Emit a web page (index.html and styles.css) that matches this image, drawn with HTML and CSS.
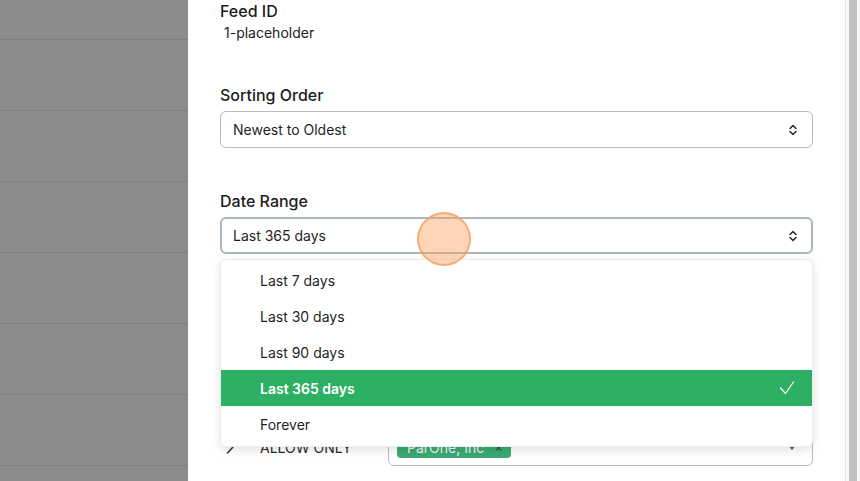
FILE: index.html
```html
<!DOCTYPE html>
<html>
<head>
<meta charset="utf-8">
<link rel="stylesheet" href="styles.css">
</head>
<body>
<div class="app">
  <div class="backdrop">
    <div class="brow first"></div>
    <div class="brow"></div>
    <div class="brow"></div>
    <div class="brow"></div>
    <div class="brow"></div>
    <div class="brow"></div>
    <div class="brow"></div>
    <div class="brow"></div>
  </div>
  <div class="panel">
    <div class="field">
      <div class="label">Feed ID</div>
      <div class="value">1-placeholder</div>
    </div>
    <div class="field sorting">
      <div class="label">Sorting Order</div>
      <div class="select">
        <span>Newest to Oldest</span>
        <svg class="updown" width="10" height="14" viewBox="0 0 10 14"><path d="M2 5.5 L5 2.5 L8 5.5 M2 8.5 L5 11.5 L8 8.5" fill="none" stroke="#2a2a2a" stroke-width="1.5" stroke-linecap="round" stroke-linejoin="round"/></svg>
      </div>
    </div>
    <div class="field daterange">
      <div class="label">Date Range</div>
      <div class="select-wrap">
        <div class="select focused">
          <span>Last 365 days</span>
          <svg class="updown" width="10" height="14" viewBox="0 0 10 14"><path d="M2 5.5 L5 2.5 L8 5.5 M2 8.5 L5 11.5 L8 8.5" fill="none" stroke="#2a2a2a" stroke-width="1.5" stroke-linecap="round" stroke-linejoin="round"/></svg>
        </div>
        <div class="cursor"></div>
        <ul class="menu">
          <li>Last 7 days</li>
          <li>Last 30 days</li>
          <li>Last 90 days</li>
          <li class="selected">Last 365 days
            <svg class="check" width="16" height="14" viewBox="0 0 16 14"><path d="M1.5 7 L6.5 12.5 L14.5 1" fill="none" stroke="#fff" stroke-width="1.2" stroke-linecap="round" stroke-linejoin="round"/></svg>
          </li>
          <li>Forever</li>
        </ul>
      </div>
    </div>
    <div class="filter-row">
      <svg class="toggle" width="10" height="16" viewBox="0 0 10 16"><path d="M2.5 2 L8 8 L2.5 14" fill="none" stroke="#333" stroke-width="1.6" stroke-linecap="round" stroke-linejoin="round"/></svg>
      <span class="rule">ALLOW ONLY</span>
      <div class="multi">
        <span class="tag">ParOne, Inc <span class="x">×</span></span>
        <span class="caret"></span>
      </div>
    </div>
  </div>
  <div class="scrollbar"><div class="thumb"></div></div>
</div>
</body>
</html>
```
FILE: styles.css
```css
* { box-sizing: border-box; }
html, body { margin: 0; padding: 0; overflow: hidden; }
body {
  width: 860px;
  height: 481px;
  font-family: Inter, "Noto Sans", sans-serif;
  color: #1f1f1f;
  background: #fff;
}
.app {
  display: flex;
  height: 481px;
  overflow: hidden;
}
.backdrop {
  width: 188px;
  flex: none;
  background: #8b8b8b;
  display: flex;
  flex-direction: column;
  overflow: hidden;
}
.brow {
  height: 71px;
  flex: none;
  border-top: 1px solid #7f7f7f;
}
.brow.first {
  height: 39px;
  border-top: none;
  background: #8b8d8c;
}
.panel {
  flex: 1;
  padding: 0 32px 0 32px;
  background: #fff;
  display: flex;
  flex-direction: column;
  overflow: hidden;
}
.label {
  font-size: 16px;
  font-weight: 500;
  line-height: 22px;
  color: #1c1c1c;
}
.value {
  font-size: 14px;
  line-height: 22px;
  padding-left: 4px;
  color: #222;
}
.sorting { margin-top: 40px; }
.sorting .label { margin-bottom: 5px; }
.daterange { margin-top: 42px; }
.daterange .label { margin-bottom: 5px; }
.select {
  height: 37px;
  border: 1px solid #bcbcbc;
  border-radius: 6px;
  display: flex;
  align-items: center;
  justify-content: space-between;
  padding: 0 14px 0 12px;
  font-size: 14px;
  color: #1f1f1f;
}
.select.focused {
  border: 2px solid #a8b7c2;
  padding: 0 13px 0 11px;
}
.select-wrap { position: relative; }
.cursor {
  position: absolute;
  left: 197px;
  top: -5px;
  width: 54px;
  height: 54px;
  border-radius: 50%;
  background: rgba(250, 160, 90, 0.45);
  border: 2px solid rgba(242, 160, 95, 0.75);
  z-index: 3;
}
.menu {
  position: absolute;
  left: 0;
  right: 0;
  top: 42px;
  margin: 0;
  padding: 2px 0 4px;
  list-style: none;
  background: #fff;
  border: 1px solid #ececec;
  border-radius: 6px;
  box-shadow: 0 3px 10px rgba(0,0,0,0.12);
  z-index: 2;
  overflow: hidden;
}
.menu li {
  height: 36px;
  display: flex;
  align-items: center;
  justify-content: space-between;
  padding: 0 17px 0 39px;
  font-size: 14px;
  color: #1f1f1f;
}
.menu li.selected {
  background: #2daf64;
  color: #fff;
  font-weight: 600;
}
.filter-row {
  margin-top: 174px;
  display: flex;
  align-items: center;
  height: 38px;
  flex: none;
}
.toggle { margin-left: 5px; }
.rule {
  margin-left: 25px;
  width: 128px;
  font-size: 14px;
  color: #2a2a2a;
}
.multi {
  flex: 1;
  height: 38px;
  border: 1px solid #bcbcbc;
  border-radius: 6px;
  display: flex;
  align-items: center;
  justify-content: space-between;
  padding: 0 16px 0 8px;
}
.tag {
  background: #3aaa72;
  color: #e8f5ee;
  font-size: 14px;
  height: 22px;
  display: inline-flex;
  align-items: center;
  padding: 0 8px 0 10px;
  border-radius: 4px;
}
.tag .x { margin-left: 10px; color: #1f5a3a; font-size: 13px; }
.caret {
  width: 0; height: 0;
  border-left: 4px solid transparent;
  border-right: 4px solid transparent;
  border-top: 5px solid #555;
}
.scrollbar {
  width: 15px;
  flex: none;
  background: #f8f8f8;
  border-left: 1px solid #e6e6e6;
  padding: 0 3px 0 3px;
}
.thumb {
  height: 100%;
  background: #c2c2c2;
}
```
